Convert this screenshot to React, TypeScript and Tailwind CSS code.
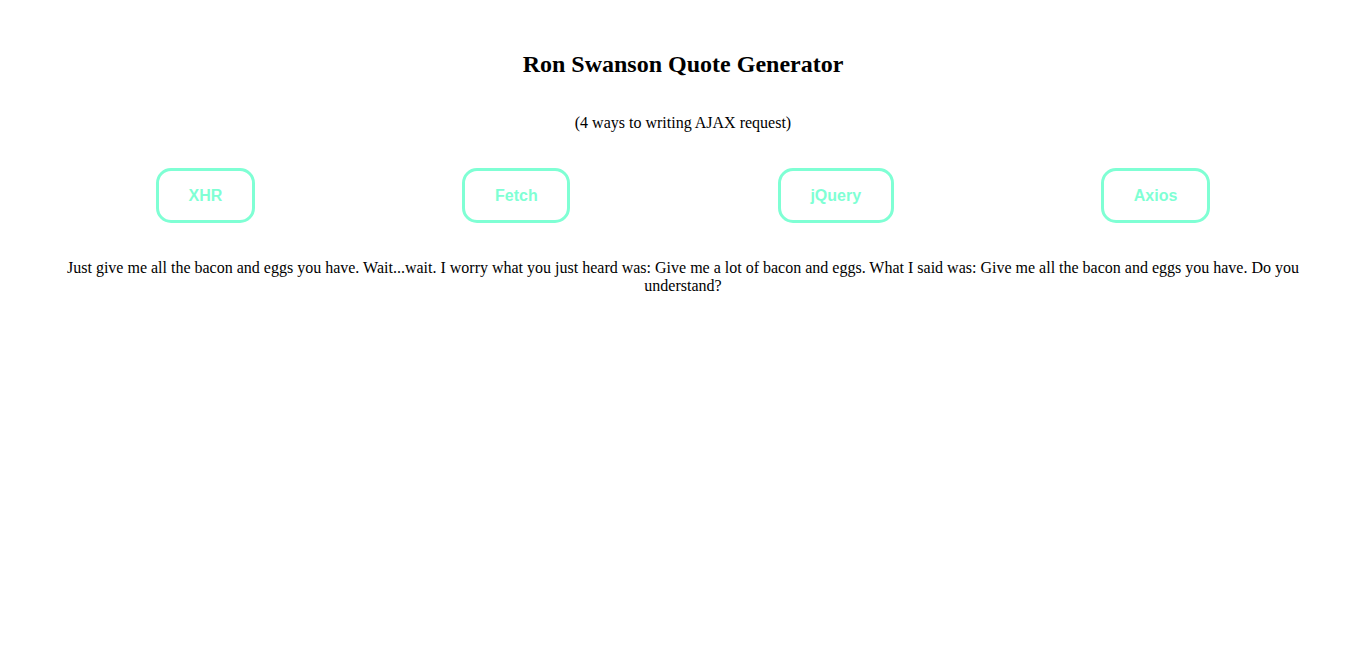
const methods = ["XHR", "Fetch", "jQuery", "Axios"];

const quote =
  "Just give me all the bacon and eggs you have. Wait...wait. I worry what you just heard was: Give me a lot of bacon and eggs. What I said was: Give me all the bacon and eggs you have. Do you understand?";

const App = () => {
  return (
    <div className="min-h-screen bg-white text-black font-['Liberation_Serif','Times_New_Roman',serif]">
      <div className="flex flex-col items-center text-center pt-[50px]">
        <h1 className="text-[24px] leading-[28px] font-bold">
          Ron Swanson Quote Generator
        </h1>
        <p className="mt-[36px] text-[16px] leading-[18px]">
          (4 ways to writing AJAX request)
        </p>
      </div>

      <div className="flex flex-row justify-between items-center px-[156px] mt-[36px]">
        {methods.map((m) => (
          <button
            key={m}
            className="border-[3px] border-[#7fffd4] rounded-[15px] px-[29.6px] py-[15.5px] text-[16px] leading-[18px] font-bold text-[#7fffd4] bg-white font-['Liberation_Sans',Arial,sans-serif]"
          >
            {m}
          </button>
        ))}
      </div>

      <p className="mt-[36px] px-[40px] text-center text-[16px] leading-[18px]">
        {quote}
      </p>
    </div>
  );
};

export default App;
